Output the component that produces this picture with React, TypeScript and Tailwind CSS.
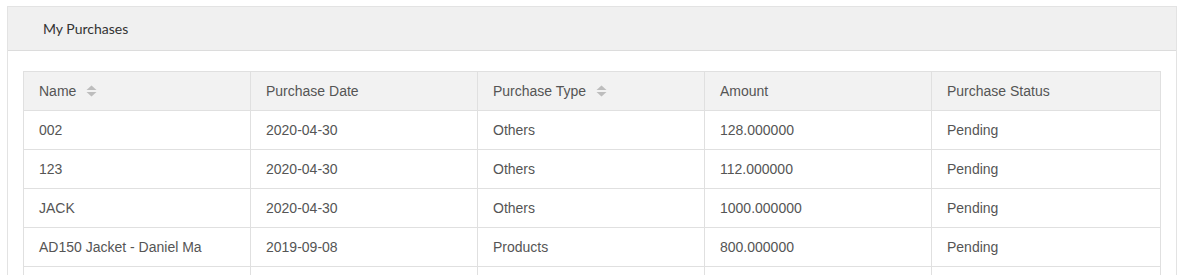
const rows = [
  { name: '002', date: '2020-04-30', type: 'Others', amount: '128.000000', status: 'Pending' },
  { name: '123', date: '2020-04-30', type: 'Others', amount: '112.000000', status: 'Pending' },
  { name: 'JACK', date: '2020-04-30', type: 'Others', amount: '1000.000000', status: 'Pending' },
  { name: 'AD150 Jacket - Daniel Ma', date: '2019-09-08', type: 'Products', amount: '800.000000', status: 'Pending' },
  { name: '', date: '', type: '', amount: '', status: '' },
]

function SortIcon() {
  return (
    <svg width="11" height="12" viewBox="0 0 11 12" className="ml-[10px] inline-block">
      <path d="M0.5 5 L5.5 0.5 L10.5 5 Z" fill="#bdbdbd" />
      <path d="M0.5 7 L5.5 11.5 L10.5 7 Z" fill="#bdbdbd" />
    </svg>
  )
}

const cols = [
  { label: 'Name', sort: true },
  { label: 'Purchase Date', sort: false },
  { label: 'Purchase Type', sort: true },
  { label: 'Amount', sort: false },
  { label: 'Purchase Status', sort: false },
]

export default function App() {
  return (
    <div className="bg-white min-h-screen pt-[6px] pl-[7px] pr-[7px]">
      <div className="border border-[#e3e3e3] bg-white">
        {/* Header */}
        <div className="bg-[#f0f0f0] border-b border-[#dcdcdc] h-[44px] flex items-center pl-[35px]">
          <span className="text-[14px] text-[#333] font-['Lato',sans-serif]">My Purchases</span>
        </div>

        <div className="pt-[20px] pl-[15px] pr-[15px] pb-[20px]">
          <table className="w-full border-collapse table-fixed font-['Liberation_Sans',Arial,sans-serif] text-[14px] text-[#555]">
            <colgroup>
              <col className="w-[227px]" />
              <col className="w-[227px]" />
              <col className="w-[227px]" />
              <col className="w-[227px]" />
              <col />
            </colgroup>
            <thead>
              <tr className="bg-[#f2f2f2]">
                {cols.map((c) => (
                  <th key={c.label} className="h-[39px] border border-[#e0e0e0] pl-[15px] text-left font-normal align-middle">
                    <span className="inline-flex items-center">
                      {c.label}
                      {c.sort && <SortIcon />}
                    </span>
                  </th>
                ))}
              </tr>
            </thead>
            <tbody>
              {rows.map((r, i) => (
                <tr key={i}>
                  {[r.name, r.date, r.type, r.amount, r.status].map((v, j) => (
                    <td key={j} className="h-[39px] border border-[#e0e0e0] pl-[15px] align-middle">
                      {v}
                    </td>
                  ))}
                </tr>
              ))}
            </tbody>
          </table>
        </div>
      </div>
    </div>
  )
}
